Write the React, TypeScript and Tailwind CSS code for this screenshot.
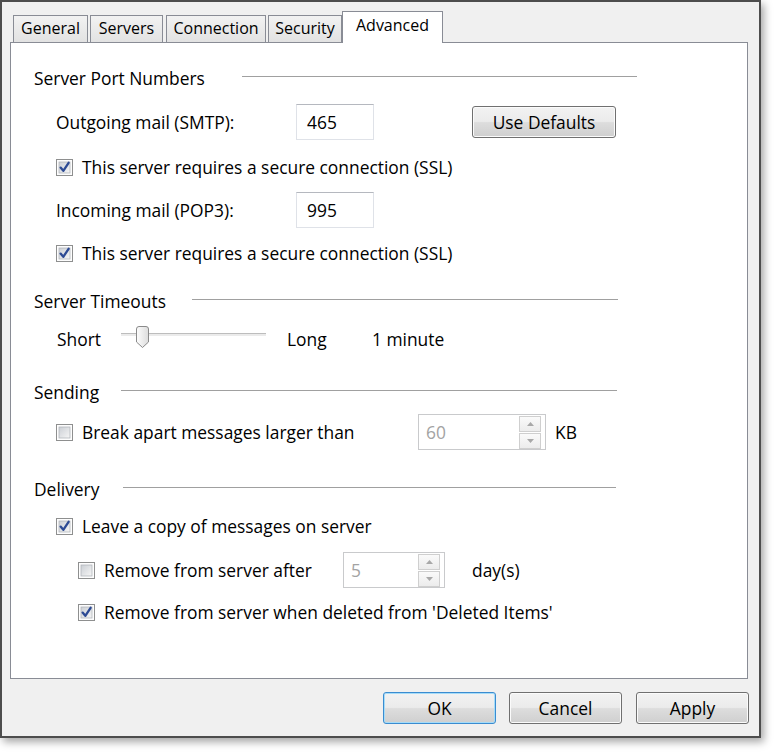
import type { ReactNode } from 'react'

// Win7-style checkbox
function CheckBox({ checked }: { checked?: boolean }) {
  return (
    <svg width="17" height="17" viewBox="0 0 17 17" className="shrink-0">
      <defs>
        <linearGradient id="cbInner" x1="0" y1="0" x2="1" y2="1">
          <stop offset="0" stopColor="#cbcfd5" />
          <stop offset="1" stopColor="#f6f6f6" />
        </linearGradient>
      </defs>
      <rect x="0.5" y="0.5" width="16" height="16" fill="#fdfdfd" stroke="#8e8f8f" />
      <rect x="3" y="3" width="11" height="11" fill="url(#cbInner)" stroke="#b2b6bc" strokeWidth="0.8" />
      {checked && (
        <path
          d="M4.6 8.6 L7.3 11.8 L12.6 3.8"
          fill="none"
          stroke="#2c4a94"
          strokeWidth="2.3"
          strokeLinecap="round"
          strokeLinejoin="round"
        />
      )}
    </svg>
  )
}

function Check({ checked, children }: { checked?: boolean; children: ReactNode }) {
  return (
    <div className="flex h-[20px] items-center gap-[9px]">
      <CheckBox checked={checked} />
      <span className="whitespace-nowrap">{children}</span>
    </div>
  )
}

// group title with the etched rule to its right; offsets are from the label's left edge
function Heading({ label, lineStart, lineEnd }: { label: string; lineStart: number; lineEnd: number }) {
  return (
    <div className="relative flex h-[20px] items-center">
      <span className="whitespace-nowrap">{label}</span>
      <div
        className="absolute top-[8px] h-px bg-[#a0a0a0]"
        style={{ left: lineStart, width: lineEnd - lineStart }}
      />
    </div>
  )
}

function TextBox({ value }: { value: string }) {
  return (
    <div className="flex h-[36px] w-[78px] items-center border border-[#dfe2e8] border-t-[#b5b8bf] bg-white pl-[10px]">
      {value}
    </div>
  )
}

function Arrow({ up }: { up?: boolean }) {
  return (
    <div className="flex h-[16px] w-[22px] items-center justify-center border border-[#cfcfcf] bg-[linear-gradient(to_bottom,#fafafa,#ececec)]">
      <svg width="7" height="4" viewBox="0 0 7 4">
        <path d={up ? 'M0 4 L3.5 0 L7 4 Z' : 'M0 0 L3.5 4 L7 0 Z'} fill="#a8a8a8" />
      </svg>
    </div>
  )
}

function Spinner({ value, width }: { value: string; width: number }) {
  return (
    <div
      className="flex h-[36px] items-center justify-between border border-[#c9cacc] bg-white pl-[7px] pr-[4px]"
      style={{ width }}
    >
      <span className="text-[#a3a3a3]">{value}</span>
      <div className="flex flex-col gap-px">
        <Arrow up />
        <Arrow />
      </div>
    </div>
  )
}

function Button({ children, primary, width = 113 }: { children: ReactNode; primary?: boolean; width?: number }) {
  return (
    <div
      className={
        'flex h-[32px] items-center justify-center rounded-[3px] border bg-[linear-gradient(to_bottom,#f2f2f2_0%,#ebebeb_48%,#dddddd_52%,#cfcfcf_100%)] ' +
        (primary
          ? 'border-[#3a8cd0] shadow-[inset_0_0_0_1px_#a6dcf8]'
          : 'border-[#707070] shadow-[inset_0_0_0_1px_#fbfbfb]')
      }
      style={{ width }}
    >
      {children}
    </div>
  )
}

function Slider() {
  return (
    <div className="relative h-[24px] w-[145px]">
      <div className="absolute left-0 right-0 top-[6px] h-[3px] border-t border-[#bdbdbd] bg-[#ebebeb]" />
      <svg width="13" height="22" viewBox="0 0 13 22" className="absolute left-[15px] top-[-1px]">
        <defs>
          <linearGradient id="thumb" x1="0" y1="0" x2="1" y2="0">
            <stop offset="0" stopColor="#fdfdfd" />
            <stop offset="1" stopColor="#dcdcdc" />
          </linearGradient>
        </defs>
        <path
          d="M3 0.5 H10 Q12.5 0.5 12.5 3 V16 L6.5 21.5 L0.5 16 V3 Q0.5 0.5 3 0.5 Z"
          fill="url(#thumb)"
          stroke="#8a8a8a"
        />
      </svg>
    </div>
  )
}

const tabs = [
  { label: 'General', w: 75, ml: 3 },
  { label: 'Servers', w: 73, ml: 2 },
  { label: 'Connection', w: 100, ml: 3 },
  { label: 'Security', w: 74, ml: 2 },
]

export default function App() {
  return (
    <div className="h-[752px] w-[775px] bg-white font-['Open_Sans',sans-serif] text-[17.4px] text-black">
      <div className="flex h-[738px] w-[761px] flex-col border-2 border-[#4d4d4d] bg-[#f0f0f0] shadow-[3px_4px_8px_rgba(0,0,0,0.35)]">
        {/* Tabs */}
        <div className="relative z-10 -mb-px ml-[8px] mt-[9px] flex h-[32px] items-end text-[16px]">
          {tabs.map((t) => (
            <div
              key={t.label}
              className="flex h-[28px] items-center justify-center border border-[#898c95] bg-[linear-gradient(to_bottom,#f2f2f2,#e2e2e2)] pb-[2px]"
              style={{ width: t.w, marginLeft: t.ml }}
            >
              {t.label}
            </div>
          ))}
          <div className="flex h-[32px] w-[101px] items-center justify-center border border-b-0 border-[#898c95] bg-white pb-[5px]">
            Advanced
          </div>
        </div>

        {/* Panel */}
        <div className="ml-[8px] h-[637px] w-[738px] border border-[#898c95] bg-white pl-[23px] pt-[25px]">
          <Heading label="Server Port Numbers" lineStart={208} lineEnd={603} />

          <div className="ml-[22px] mt-[16px] flex items-center">
            <span className="w-[240px]">Outgoing mail (SMTP):</span>
            <TextBox value="465" />
            <div className="ml-[98px]">
              <Button width={144}>Use Defaults</Button>
            </div>
          </div>

          <div className="ml-[22px] mt-[17px]">
            <Check checked>This server requires a secure connection (SSL)</Check>
          </div>

          <div className="ml-[22px] mt-[15px] flex items-center">
            <span className="w-[240px]">Incoming mail (POP3):</span>
            <TextBox value="995" />
          </div>

          <div className="ml-[22px] mt-[15px]">
            <Check checked>This server requires a secure connection (SSL)</Check>
          </div>

          <div className="mt-[28px]">
            <Heading label="Server Timeouts" lineStart={158} lineEnd={584} />
          </div>

          <div className="ml-[23px] mt-[16px] flex h-[24px] items-center">
            <span className="w-[64px]">Short</span>
            <Slider />
            <span className="ml-[21px] w-[85px]">Long</span>
            <span>1 minute</span>
          </div>

          <div className="mt-[31px]">
            <Heading label="Sending" lineStart={87} lineEnd={583} />
          </div>

          <div className="ml-[22px] mt-[12px] flex h-[36px] items-center">
            <div className="w-[362px]">
              <Check>Break apart messages larger than</Check>
            </div>
            <Spinner value="60" width={128} />
            <span className="ml-[9px]">KB</span>
          </div>

          <div className="mt-[29px]">
            <Heading label="Delivery" lineStart={89} lineEnd={582} />
          </div>

          <div className="ml-[22px] mt-[17px]">
            <Check checked>Leave a copy of messages on server</Check>
          </div>

          <div className="ml-[44px] mt-[16px] flex h-[36px] items-center">
            <div className="w-[265px]">
              <Check>Remove from server after</Check>
            </div>
            <Spinner value="5" width={102} />
            <span className="ml-[27px]">day(s)</span>
          </div>

          <div className="ml-[44px] mt-[14px]">
            <Check checked>Remove from server when deleted from 'Deleted Items'</Check>
          </div>
        </div>

        {/* Dialog buttons */}
        <div className="mr-[10px] mt-[13px] flex justify-end">
          <Button primary>OK</Button>
          <div className="ml-[13px]">
            <Button>Cancel</Button>
          </div>
          <div className="ml-[14px]">
            <Button>Apply</Button>
          </div>
        </div>
      </div>
    </div>
  )
}
